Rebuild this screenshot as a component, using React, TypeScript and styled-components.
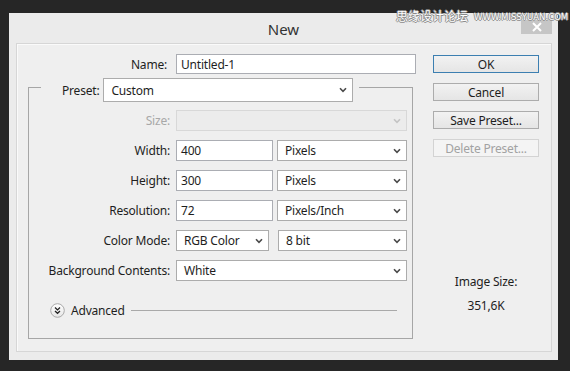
import styled, { createGlobalStyle } from 'styled-components'

const GlobalStyle = createGlobalStyle`
  html, body {
    margin: 0;
    padding: 0;
  }
  body {
    background: #262626;
    font-family: "Noto Sans", "Open Sans", sans-serif;
    font-size: 12px;
    letter-spacing: -0.2px;
    color: #1e1e1e;
  }
`

function Chevron({ disabled }: { disabled?: boolean }) {
  return (
    <svg width="8" height="6" viewBox="0 0 8 6">
      <polyline points="1,1.2 4,4.3 7,1.2" fill="none" stroke={disabled ? '#c4c4c4' : '#4a4a4a'} strokeWidth="1.6" />
    </svg>
  )
}

function DropDown({ value, width, disabled }: { value?: string; width?: number; disabled?: boolean }) {
  return (
    <Select $w={width} $disabled={disabled}>
      <span>{value}</span>
      <Chevron disabled={disabled} />
    </Select>
  )
}

export default function App() {
  return (
    <Page>
      <GlobalStyle />
      <Dialog>
        <TitleBar>
          <Title>New</Title>
          <CloseButton>
            <svg width="10" height="10" viewBox="0 0 10 10">
              <path d="M1 1L9 9M9 1L1 9" stroke="#fff" strokeWidth="2" />
            </svg>
          </CloseButton>
        </TitleBar>
        <Frame>
          <LeftColumn>
            <NameRow>
              <Label>Name:</Label>
              <TextBox $h={20}>Untitled-1</TextBox>
            </NameRow>
            <GroupBox>
              <Legend>
                <PresetRow>
                  <Label>Preset:</Label>
                  <Select $w={250} $h={24}>
                    <span>Custom</span>
                    <Chevron />
                  </Select>
                </PresetRow>
              </Legend>
              <Rows>
                <Row>
                  <Label $disabled>Size:</Label>
                  <DropDown disabled />
                </Row>
                <Row>
                  <Label>Width:</Label>
                  <Pair $gap={4}>
                    <TextBox $w={97}>400</TextBox>
                    <DropDown value="Pixels" width={130} />
                  </Pair>
                </Row>
                <Row>
                  <Label>Height:</Label>
                  <Pair $gap={4}>
                    <TextBox $w={97}>300</TextBox>
                    <DropDown value="Pixels" width={130} />
                  </Pair>
                </Row>
                <Row>
                  <Label>Resolution:</Label>
                  <Pair $gap={4}>
                    <TextBox $w={97}>72</TextBox>
                    <DropDown value="Pixels/Inch" width={130} />
                  </Pair>
                </Row>
                <Row>
                  <Label>Color Mode:</Label>
                  <Pair $gap={9}>
                    <DropDown value="RGB Color" width={93} />
                    <DropDown value="8 bit" width={129} />
                  </Pair>
                </Row>
                <Row>
                  <Label>Background Contents:</Label>
                  <DropDown value="White" />
                </Row>
              </Rows>
              <AdvancedRow>
                <ToggleIcon>
                  <svg width="15" height="15" viewBox="0 0 15 15">
                    <defs>
                      <linearGradient id="adv" x1="0" y1="0" x2="0" y2="1">
                        <stop offset="0" stopColor="#ffffff" />
                        <stop offset="1" stopColor="#e6e6e6" />
                      </linearGradient>
                    </defs>
                    <circle cx="7.5" cy="7.5" r="6.8" fill="url(#adv)" stroke="#a9a9a9" />
                    <polyline points="5,4.6 7.5,6.9 10,4.6" fill="none" stroke="#222" strokeWidth="1.3" />
                    <polyline points="5,8 7.5,10.3 10,8" fill="none" stroke="#222" strokeWidth="1.3" />
                  </svg>
                </ToggleIcon>
                <span>Advanced</span>
                <Rule />
              </AdvancedRow>
            </GroupBox>
          </LeftColumn>
          <RightColumn>
            <Button $variant="primary">OK</Button>
            <Button>Cancel</Button>
            <Button>Save Preset...</Button>
            <Button $variant="disabled">Delete Preset...</Button>
            <ImageSize>
              <div>Image Size:</div>
              <div>351,6K</div>
            </ImageSize>
          </RightColumn>
        </Frame>
      </Dialog>
      <Watermark>
        <WatermarkCn>思缘设计论坛</WatermarkCn>
        <WatermarkUrl>WWW.MISSYUAN.COM</WatermarkUrl>
      </Watermark>
    </Page>
  )
}

const Page = styled.div`
  position: relative;
  width: 570px;
  height: 371px;
  overflow: hidden;
  padding: 13px 0 0 9px;
  box-sizing: border-box;
`

const Dialog = styled.div`
  width: 549px;
  height: 347px;
  background: #ebebeb;
  display: flex;
  flex-direction: column;
  position: relative;
`

const TitleBar = styled.div`
  height: 30px;
  display: flex;
  align-items: center;
  justify-content: center;
`

const Title = styled.div`
  font-size: 15px;
  letter-spacing: 0;
  color: #333;
  margin-top: 1px;
`

const CloseButton = styled.div`
  position: absolute;
  top: 7px;
  right: 6px;
  width: 31px;
  height: 14px;
  background: #c6c6c6;
  display: flex;
  align-items: center;
  justify-content: center;
`

const Frame = styled.div`
  flex: 1;
  margin: 0 6px 8px 7px;
  border: 1px solid #d6d6d6;
  box-shadow: inset 1px 1px 0 #fafafa;
  background: #efefef;
  display: flex;
  gap: 17px;
  padding: 10px 12px 0 11px;
`

const LeftColumn = styled.div`
  width: 388px;
  display: flex;
  flex-direction: column;
`

const NameRow = styled.div`
  display: grid;
  grid-template-columns: 139px 240px;
  column-gap: 9px;
  align-items: center;
  height: 20px;
`

const Label = styled.div<{ $disabled?: boolean }>`
  text-align: right;
  white-space: nowrap;
  color: ${p => (p.$disabled ? '#a8a8a8' : '#1e1e1e')};
`

const TextBox = styled.div<{ $w?: number; $h?: number }>`
  box-sizing: border-box;
  width: ${p => (p.$w ? `${p.$w}px` : '100%')};
  height: ${p => p.$h ?? 21}px;
  border: 1px solid #abadb3;
  background: #fff;
  padding: 0 4px;
  display: flex;
  align-items: center;
  white-space: nowrap;
`

const Select = styled.div<{ $w?: number; $h?: number; $disabled?: boolean }>`
  box-sizing: border-box;
  width: ${p => (p.$w ? `${p.$w}px` : '100%')};
  height: ${p => p.$h ?? 21}px;
  border: 1px solid ${p => (p.$disabled ? '#d8d8d8' : '#acacac')};
  background: ${p => (p.$disabled ? '#ececec' : '#fff')};
  padding: 0 5px 0 7px;
  display: flex;
  align-items: center;
  justify-content: space-between;
  white-space: nowrap;
`

const GroupBox = styled.fieldset`
  margin: 4px 0 0 0;
  padding: 0;
  width: 385px;
  box-sizing: border-box;
  min-width: 0;
  border: 1px solid #a6a6a6;
`

const Legend = styled.legend`
  margin-left: 12px;
  padding: 0 6px 0 21px;
  height: 18px;
`

const PresetRow = styled.div`
  display: flex;
  align-items: center;
  gap: 4px;
  height: 24px;
`

const Rows = styled.div`
  display: flex;
  flex-direction: column;
  gap: 9px;
  padding: 14px 5px 0 0;
`

const Row = styled.div`
  display: grid;
  grid-template-columns: 141px 231px;
  column-gap: 6px;
  align-items: center;
  height: 21px;
`

const Pair = styled.div<{ $gap: number }>`
  display: flex;
  gap: ${p => p.$gap}px;
`

const AdvancedRow = styled.div`
  display: flex;
  align-items: center;
  gap: 6px;
  margin-top: 22px;
  padding: 0 15px 20px 21px;
  height: 15px;
`

const ToggleIcon = styled.div`
  width: 15px;
  height: 15px;
  display: flex;
`

const Rule = styled.div`
  flex: 1;
  height: 1px;
  background: #a9a9a9;
`

const RightColumn = styled.div`
  width: 106px;
  display: flex;
  flex-direction: column;
  gap: 10px;
  padding-top: 1px;
`

const Button = styled.div<{ $variant?: 'primary' | 'disabled' }>`
  box-sizing: border-box;
  height: 18px;
  border: 1px solid
    ${p => (p.$variant === 'primary' ? '#3c7fb1' : p.$variant === 'disabled' ? '#d3d3d3' : '#acacac')};
  background: ${p =>
    p.$variant === 'disabled' ? '#f4f4f4' : 'linear-gradient(#f2f2f2, #e5e5e5)'};
  color: ${p => (p.$variant === 'disabled' ? '#a2a2a2' : '#1e1e1e')};
  display: flex;
  align-items: center;
  justify-content: center;
  white-space: nowrap;
`

const ImageSize = styled.div`
  margin-top: 107px;
  display: flex;
  flex-direction: column;
  align-items: center;
  gap: 8px;
  line-height: 16px;
`

const Watermark = styled.div`
  position: absolute;
  top: 8px;
  left: 396px;
  display: flex;
  align-items: center;
  gap: 6px;
  color: #ffffff;
  letter-spacing: 0;
  text-shadow: 1px 0 0 #8a8a8a, -1px 0 0 #8a8a8a, 0 1px 0 #8a8a8a, 0 -1px 0 #8a8a8a;
  white-space: nowrap;
`

const WatermarkCn = styled.span`
  font-family: "Noto Sans CJK SC", sans-serif;
  font-size: 12px;
  line-height: 14px;
`

const WatermarkUrl = styled.span`
  font-family: "DejaVu Sans Condensed", "Liberation Sans Narrow", sans-serif;
  font-size: 9.5px;
  line-height: 14px;
  margin-top: 2px;
`
